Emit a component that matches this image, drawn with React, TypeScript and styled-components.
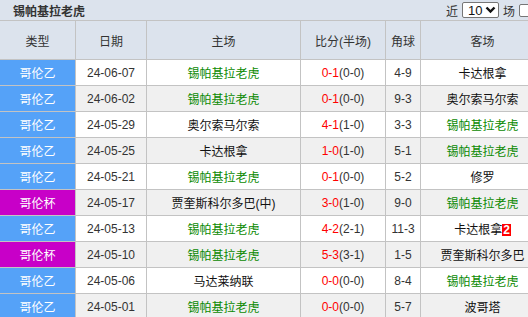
import React from "react";
import styled, { createGlobalStyle } from "styled-components";

const Global = createGlobalStyle`
  html, body { margin: 0; padding: 0; overflow: hidden; background: #fff; }
  body {
    font-family: "Liberation Sans", "Noto Sans CJK SC", sans-serif;
    font-size: 12px;
    color: #333;
  }
`;

const Panel = styled.div`
  width: 545px;
`;

const TitleBar = styled.div`
  display: flex;
  align-items: center;
  height: 20px;
  padding: 0 13px;
  background: #dce3ed;
  border-bottom: 1px solid #c3c3c3;
`;

const Title = styled.h2`
  margin: 0;
  font-size: 12px;
  font-weight: bold;
  color: #333;
`;

const Controls = styled.div`
  margin-left: auto;
  display: flex;
  align-items: center;
  gap: 4px;
  color: #333;
  font-size: 12px;
`;

const FakeSelect = styled.div`
  display: flex;
  align-items: center;
  justify-content: space-between;
  box-sizing: border-box;
  width: 37px;
  height: 16px;
  padding: 0 2px 0 5px;
  border: 1px solid #767676;
  border-radius: 2px;
  background: #fff;
  font-size: 13px;
  color: #111;
`;

const Check = styled.span`
  display: inline-block;
  box-sizing: border-box;
  width: 13px;
  height: 13px;
  border: 1px solid #767676;
  border-radius: 2px;
  background: #fff;
`;

const Table = styled.table`
  width: 545px;
  table-layout: fixed;
  border-collapse: separate;
  border-spacing: 0;
`;

const Th = styled.th`
  height: 38px;
  padding: 0;
  background: #dce3ed;
  border-right: 1px solid #c3c3c3;
  border-bottom: 1px solid #c3c3c3;
  font-weight: normal;
  color: #333;
  text-align: center;
  vertical-align: middle;
  font-size: 12px;
`;

const Row = styled.tr<{ $alt: boolean }>`
  background: ${(p) => (p.$alt ? "#f0f0f0" : "#ffffff")};
`;

const Td = styled.td<{ $color?: string }>`
  height: 25px;
  padding: 0;
  border-right: 1px solid #c3c3c3;
  border-bottom: 1px solid #c3c3c3;
  text-align: center;
  vertical-align: middle;
  white-space: nowrap;
  color: ${(p) => p.$color || "#333"};
`;

const TypeTd = styled(Td)<{ $cup: boolean }>`
  background: ${(p) => (p.$cup ? "#c800c8" : "#55a2f8")};
  color: #fff;
`;

const Red = styled.span`
  color: #ff0000;
`;

const Badge = styled.span`
  display: inline-block;
  padding: 0 1px;
  line-height: 12px;
  background: #ff0000;
  color: #fff;
  font-weight: bold;
  vertical-align: 0;
`;

const GREEN = "#0a8a00";
const TEAM = "锡帕基拉老虎";

type Match = {
  type: string;
  date: string;
  home: string;
  ft: string;
  ht: string;
  corner: string;
  away: string;
  badge?: string;
};

const rows: Match[] = [
  { type: "哥伦乙", date: "24-06-07", home: TEAM, ft: "0-1", ht: "(0-0)", corner: "4-9", away: "卡达根拿" },
  { type: "哥伦乙", date: "24-06-02", home: TEAM, ft: "0-1", ht: "(0-0)", corner: "9-3", away: "奥尔索马尔索" },
  { type: "哥伦乙", date: "24-05-29", home: "奥尔索马尔索", ft: "4-1", ht: "(1-0)", corner: "3-3", away: TEAM },
  { type: "哥伦乙", date: "24-05-25", home: "卡达根拿", ft: "1-0", ht: "(1-0)", corner: "5-1", away: TEAM },
  { type: "哥伦乙", date: "24-05-21", home: TEAM, ft: "0-1", ht: "(0-0)", corner: "5-2", away: "修罗" },
  { type: "哥伦杯", date: "24-05-17", home: "贾奎斯科尔多巴(中)", ft: "3-0", ht: "(1-0)", corner: "9-0", away: TEAM },
  { type: "哥伦乙", date: "24-05-13", home: TEAM, ft: "4-2", ht: "(2-1)", corner: "11-3", away: "卡达根拿", badge: "2" },
  { type: "哥伦杯", date: "24-05-10", home: TEAM, ft: "5-3", ht: "(3-1)", corner: "1-5", away: "贾奎斯科尔多巴" },
  { type: "哥伦乙", date: "24-05-06", home: "马达莱纳联", ft: "0-0", ht: "(0-0)", corner: "8-4", away: TEAM },
  { type: "哥伦乙", date: "24-05-01", home: TEAM, ft: "0-0", ht: "(0-0)", corner: "5-7", away: "波哥塔" },
];

const teamColor = (name: string) => (name === TEAM ? GREEN : "#111");

export default function App() {
  return (
    <Panel>
      <Global />
      <TitleBar>
        <Title>锡帕基拉老虎</Title>
        <Controls>
          <span>近</span>
          <FakeSelect>
            <span>10</span>
            <svg width="11" height="8" viewBox="0 0 11 8">
              <polyline points="1.5,1.5 5.5,5.5 9.5,1.5" fill="none" stroke="#111" strokeWidth="2.4" />
            </svg>
          </FakeSelect>
          <span>场</span>
          <Check />
        </Controls>
      </TitleBar>
      <Table>
        <colgroup>
          <col style={{ width: 76 }} />
          <col style={{ width: 71 }} />
          <col style={{ width: 154 }} />
          <col style={{ width: 85 }} />
          <col style={{ width: 35 }} />
          <col style={{ width: 124 }} />
        </colgroup>
        <thead>
          <tr>
            <Th>类型</Th>
            <Th>日期</Th>
            <Th>主场</Th>
            <Th>比分(半场)</Th>
            <Th>角球</Th>
            <Th>客场</Th>
          </tr>
        </thead>
        <tbody>
          {rows.map((r, i) => (
            <Row key={r.date} $alt={i % 2 === 1}>
              <TypeTd $cup={r.type === "哥伦杯"}>{r.type}</TypeTd>
              <Td>{r.date}</Td>
              <Td $color={teamColor(r.home)}>{r.home}</Td>
              <Td>
                <Red>{r.ft}</Red>
                {r.ht}
              </Td>
              <Td>{r.corner}</Td>
              <Td $color={teamColor(r.away)}>
                {r.away}
                {r.badge && <Badge>{r.badge}</Badge>}
              </Td>
            </Row>
          ))}
        </tbody>
      </Table>
    </Panel>
  );
}
